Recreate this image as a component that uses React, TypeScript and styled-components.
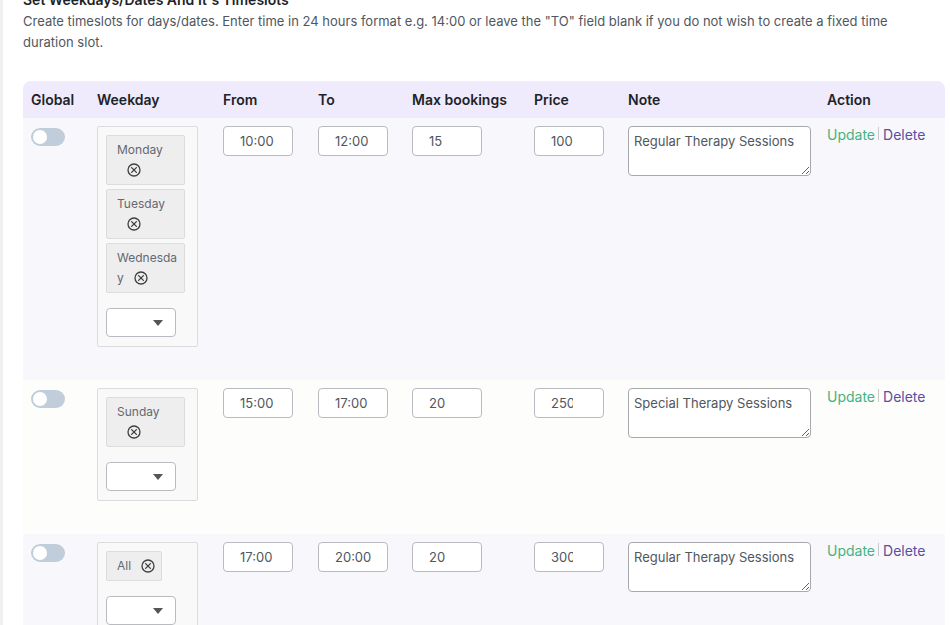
import React from "react";
import styled, { createGlobalStyle } from "styled-components";

const GlobalStyle = createGlobalStyle`
  html, body { margin: 0; padding: 0; background: #ffffff; }
  body { font-family: Inter, "Noto Sans", "Liberation Sans", sans-serif; overflow: hidden; }
  * { box-sizing: border-box; }
`;

const Page = styled.div`
  min-height: 100vh;
  border-left: 3px solid #f0f0f1;
  padding: 0 5px 0 20px;
  margin-top: -10px;
`;

const Heading = styled.h3`
  margin: 0;
  font-size: 14px;
  line-height: 20px;
  font-weight: 600;
  color: #1d2327;
`;

const Description = styled.p`
  margin: 1px 0 28px;
  max-width: 900px;
  font-size: 13px;
  line-height: 21px;
  color: #50575e;
`;

const Table = styled.table`
  width: 922px;
  table-layout: fixed;
  border-collapse: separate;
  border-spacing: 0;
`;

const HeadCell = styled.th`
  background: #efebfd;
  text-align: left;
  font-size: 14px;
  font-weight: 600;
  color: #1d2327;
  height: 37px;
  padding: 0 8px;
  white-space: nowrap;
  &:first-child { border-top-left-radius: 8px; }
  &:last-child { border-top-right-radius: 8px; }
`;

const Row = styled.tr<{ $alt?: boolean }>`
  background: ${(p) => (p.$alt ? "#fdfdfb" : "#f8f8fc")};
`;

const Cell = styled.td`
  vertical-align: top;
  padding: 8px 8px 33px;
`;

const Toggle = styled.span`
  display: block;
  position: relative;
  width: 34px;
  height: 18px;
  margin-top: 2px;
  border-radius: 9px;
  background: #c2cddb;
  &::after {
    content: "";
    position: absolute;
    left: 2px;
    top: 2px;
    width: 14px;
    height: 14px;
    border-radius: 50%;
    background: #ffffff;
  }
`;

const DayBox = styled.div`
  width: 101px;
  border: 1px solid #dcdcde;
  background: #f9f9f9;
  border-radius: 2px;
  padding: 8px 8px 9px 8px;
`;

const ChipList = styled.div`
  display: flex;
  flex-direction: column;
  align-items: flex-start;
  gap: 4px;
`;

const Chip = styled.div`
  max-width: 79px;
  background: #eeeeee;
  border: 1px solid #dcdcde;
  border-radius: 2px;
  padding: 4px 3px 4px 10px;
  font-size: 12px;
  line-height: 20px;
  color: #646970;
  word-break: break-all;
`;

const RemoveIcon = styled.svg`
  display: inline-block;
  width: 14px;
  height: 14px;
  margin-left: 10px;
  margin-right: 3px;
  vertical-align: -3px;
`;

const SelectWrap = styled.div`
  position: relative;
  width: 70px;
  height: 29px;
  margin-top: 15px;
`;

const DaySelect = styled.select`
  appearance: none;
  width: 100%;
  height: 100%;
  border: 1px solid #b8bcc0;
  border-radius: 4px;
  background: #ffffff;
`;

const Caret = styled.svg`
  position: absolute;
  right: 13px;
  top: 12px;
  width: 10px;
  height: 6px;
  pointer-events: none;
`;

const Field = styled.input<{ $num?: boolean }>`
  width: 70px;
  height: 30px;
  border: 1px solid #b8bcc0;
  border-radius: 4px;
  background: #ffffff;
  padding: 0 ${(p) => (p.$num ? "30px" : "16px")} 0 16px;
  font-family: inherit;
  font-size: 13px;
  color: #50575e;
`;

const Note = styled.textarea`
  display: block;
  width: 183px;
  height: 50px;
  border: 1px solid #a7aaad;
  border-radius: 4px;
  background: #ffffff;
  padding: 4px 5px;
  font-family: inherit;
  font-size: 13px;
  line-height: 20px;
  color: #50575e;
`;

const Actions = styled.div`
  display: flex;
  align-items: center;
  font-size: 14px;
  line-height: 20px;
  margin-top: -1px;
`;

const ActionLink = styled.a<{ $tone: "update" | "delete" }>`
  color: ${(p) => (p.$tone === "update" ? "#44b37f" : "#5b4fa0")};
  text-decoration: none;
  cursor: pointer;
`;

const Divider = styled.span`
  display: inline-block;
  width: 1px;
  height: 13px;
  background: #c9c9c9;
  margin: 0 4px 0 3px;
  transform: translateY(-2px);
`;

type Slot = {
  days: string[];
  from: string;
  to: string;
  max: string;
  price: string;
  note: string;
};

const slots: Slot[] = [
  { days: ["Monday", "Tuesday", "Wednesday"], from: "10:00", to: "12:00", max: "15", price: "100", note: "Regular Therapy Sessions" },
  { days: ["Sunday"], from: "15:00", to: "17:00", max: "20", price: "250", note: "Special Therapy Sessions" },
  { days: ["All"], from: "17:00", to: "20:00", max: "20", price: "300", note: "Regular Therapy Sessions" },
];

const columns = [66, 126, 95, 94, 122, 94, 199, 126];
const headers = ["Global", "Weekday", "From", "To", "Max bookings", "Price", "Note", "Action"];

function CircleX() {
  return (
    <RemoveIcon viewBox="0 0 14 14" aria-hidden>
      <circle cx="7" cy="7" r="6" fill="none" stroke="#3f3f3f" strokeWidth="1.3" />
      <path d="M4.6 4.6 L9.4 9.4 M9.4 4.6 L4.6 9.4" stroke="#3f3f3f" strokeWidth="1.3" strokeLinecap="round" />
    </RemoveIcon>
  );
}

export default function App() {
  return (
    <>
      <GlobalStyle />
      <Page>
        <Heading>Set Weekdays/Dates And It's Timeslots</Heading>
        <Description>
          Create timeslots for days/dates. Enter time in 24 hours format e.g. 14:00 or leave the "TO" field blank if you do not wish to create a fixed time duration slot.
        </Description>
        <Table>
          <colgroup>
            {columns.map((w, i) => (
              <col key={i} style={{ width: w }} />
            ))}
          </colgroup>
          <thead>
            <tr>
              {headers.map((h) => (
                <HeadCell key={h}>{h}</HeadCell>
              ))}
            </tr>
          </thead>
          <tbody>
            {slots.map((s, i) => (
              <Row key={i} $alt={i % 2 === 1}>
                <Cell>
                  <Toggle />
                </Cell>
                <Cell>
                  <DayBox>
                    <ChipList>
                      {s.days.map((d) => (
                        <Chip key={d}>
                          {d}
                          <CircleX />
                        </Chip>
                      ))}
                    </ChipList>
                    <SelectWrap>
                      <DaySelect defaultValue="">
                        <option value=""></option>
                      </DaySelect>
                      <Caret viewBox="0 0 10 6" aria-hidden>
                        <path d="M0 0 L10 0 L5 6 Z" fill="#555" />
                      </Caret>
                    </SelectWrap>
                  </DayBox>
                </Cell>
                <Cell>
                  <Field defaultValue={s.from} />
                </Cell>
                <Cell>
                  <Field defaultValue={s.to} />
                </Cell>
                <Cell>
                  <Field $num defaultValue={s.max} />
                </Cell>
                <Cell>
                  <Field $num defaultValue={s.price} />
                </Cell>
                <Cell>
                  <Note defaultValue={s.note} />
                </Cell>
                <Cell>
                  <Actions>
                    <ActionLink $tone="update">Update</ActionLink>
                    <Divider />
                    <ActionLink $tone="delete">Delete</ActionLink>
                  </Actions>
                </Cell>
              </Row>
            ))}
          </tbody>
        </Table>
      </Page>
    </>
  );
}
